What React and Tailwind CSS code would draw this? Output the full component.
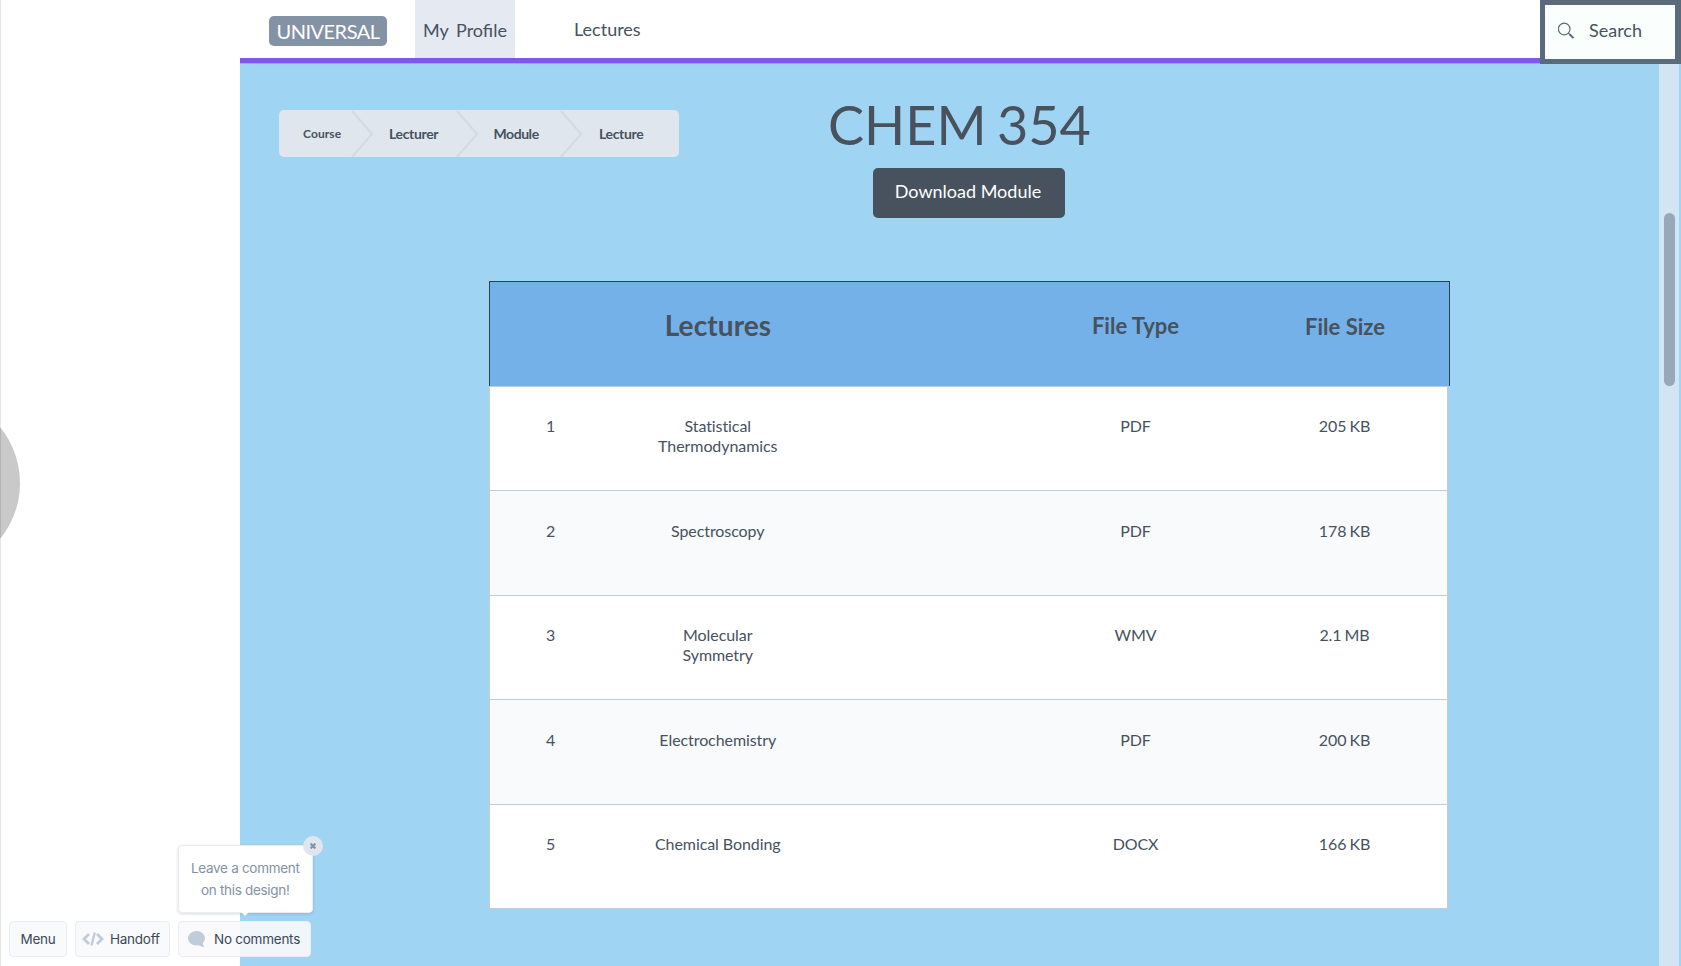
const crumbs = [
  { label: "Course", cell: "w-[82px] pl-6 pt-px text-[12px] tracking-[0.1px]" },
  { label: "Lecturer", cell: "w-[105px] pl-[28px] pt-px text-sm tracking-[-0.35px]" },
  { label: "Module", cell: "w-[105px] pl-[27.5px] pt-px text-sm tracking-[-0.45px]" },
  { label: "Lecture", cell: "w-[106px] pl-[28px] pt-px text-sm tracking-[-0.35px]" },
];

const rows = [
  { id: 1, name: ["Statistical", "Thermodynamics"], type: "PDF", size: "205 KB", box: "h-[104px] bg-white" },
  { id: 2, name: ["Spectroscopy"], type: "PDF", size: "178 KB", box: "h-[105px] bg-[#f8fafc] pt-px" },
  { id: 3, name: ["Molecular", "Symmetry"], type: "WMV", size: "2.1 MB", box: "h-[104px] bg-white" },
  { id: 4, name: ["Electrochemistry"], type: "PDF", size: "200 KB", box: "h-[105px] bg-[#f8fafc] pt-px" },
  { id: 5, name: ["Chemical Bonding"], type: "DOCX", size: "166 KB", box: "h-[105px] bg-white border-b" },
];

function Header() {
  return (
    <header className="flex h-16 shrink-0">
      <div className="flex h-[63px] flex-1 border-b-[5px] border-[#8056f0] bg-white shadow-[0_1px_0_#94b0f2]">
        <div className="ml-[29px] mt-4 flex h-[30px] w-[118px] items-center justify-center rounded-[5px] bg-[#8492a6] pb-px text-[20px] leading-none tracking-[-0.5px] text-white">
          UNIVERSAL
        </div>
        <div className="ml-7 flex h-[58px] w-[100px] items-center justify-center bg-[#e5e9f2] pt-px text-[18px] leading-none [word-spacing:3px] whitespace-nowrap">
          My Profile
        </div>
        <div className="ml-[59px] mt-[19px] text-[18px] leading-5">Lectures</div>
      </div>
      <div className="flex h-16 w-[141px] border-[5px] border-r-[6px] border-[#5a6b7b] bg-[#fafffd] pl-[13px]">
        <svg className="mt-[17px] h-[18px] w-[18px]" viewBox="0 0 18 18" fill="none" stroke="#5a6978">
          <circle cx="6.2" cy="7" r="5.8" strokeWidth="1.2" />
          <path d="M10.5 11.3l1.6 1.4" strokeWidth="1.2" />
          <path d="M11.5 12.2l4 3.9" strokeWidth="2" />
        </svg>
        <span className="ml-[13px] mt-[15px] text-[18px] leading-5">Search</span>
      </div>
    </header>
  );
}

function Breadcrumb() {
  return (
    <nav className="relative mt-[46px] ml-[39px] flex h-[47px] w-[400px] items-center overflow-hidden rounded-[5px] bg-[#e0e6ed] font-bold leading-none">
      {crumbs.map((c) => (
        <div key={c.label} className={c.cell}>
          {c.label}
        </div>
      ))}
      <svg className="absolute inset-0 h-full w-full" viewBox="0 0 400 47" fill="none" stroke="#d3dae1" strokeWidth="2">
        <path d="M73 1L93 24L73 47" />
        <path d="M178 1L198 24L178 47" />
        <path d="M282 1L302 24L282 47" />
      </svg>
    </nav>
  );
}

function LectureTable() {
  return (
    <section className="ml-[249px] w-[961px] text-center">
      <div className="flex h-[105px] border border-b-0 border-[#2f3f4f] bg-[#73b1e8] font-bold">
        <div className="w-[122px]" />
        <div className="w-[212px] pt-[26px] text-[28px] leading-[34px] tracking-[0.1px]">Lectures</div>
        <div className="w-[207px]" />
        <div className="w-[209px] pt-[30px] text-[22px] leading-[28px]">File Type</div>
        <div className="w-[209px] pl-px pt-[31px] text-[22px] leading-[28px]">File Size</div>
      </div>
      <div className="w-[959px] text-[16px] leading-5 tracking-[-0.08px]">
        {rows.map((r) => (
          <div key={r.id} className={`flex border-t border-x border-[#c0ccda] ${r.box}`}>
            <div className="w-[121px] pt-[29px]">{r.id}</div>
            <div className="w-[213px] pl-[0.5px] pt-[29px]">
              {r.name.map((line) => (
                <div key={line}>{line}</div>
              ))}
            </div>
            <div className="w-[207px]" />
            <div className="w-[209px] pt-[29px]">{r.type}</div>
            <div className="w-[207px] pl-[2px] pt-[29px] [word-spacing:-1px]">{r.size}</div>
          </div>
        ))}
      </div>
    </section>
  );
}

function Toolbar() {
  return (
    <div className="absolute bottom-[9px] left-[9px] flex h-9 gap-2 font-['Inter',sans-serif] text-[13.5px] leading-none tracking-[-0.25px] text-[#3c4858]">
      <button className="flex w-[58px] items-center justify-center rounded border border-[#e9edf2] bg-[#f9fafc] pt-0.5">Menu</button>
      <button className="flex w-[95px] items-center rounded border border-[#e9edf2] bg-[#f9fafc] pl-1.5">
        <svg className="h-[14px] w-[22px]" viewBox="0 0 22 14" fill="none" stroke="#c0ccda" strokeWidth="2.8">
          <path d="M7 2L2 7l5 5M15 2l5 5-5 5" />
          <path d="M12.8 0.5L9.4 13.5" strokeWidth="2.4" />
        </svg>
        <span className="ml-[6px] pt-0.5">Handoff</span>
      </button>
      <div className="relative">
        <button className="flex h-9 w-[133px] items-center rounded border border-[#e9edf2] bg-[#f9fafc]/90 pl-[9px] whitespace-nowrap">
          <svg className="h-4 w-[17px]" viewBox="0 0 17 16" fill="#c0ccda">
            <ellipse cx="8.5" cy="7.3" rx="8.5" ry="7.3" />
            <path d="M9.5 13.5c2 1.6 4.2 2.3 7 2.4-1-1-1.6-2.2-1.7-4.3z" />
          </svg>
          <span className="ml-[9px] pt-0.5">No comments</span>
        </button>
        <div className="absolute bottom-[44px] left-0 h-[68px] w-[134.5px] rounded border border-[#e9edf2] bg-white pt-[11px] text-center leading-[22px] tracking-[-0.3px] text-[#8492a6] shadow-[0_1px_3px_rgba(60,72,88,0.2)] whitespace-nowrap">
          Leave a comment
          <br />
          on this design!
          <svg className="absolute -bottom-[4px] left-[62px] h-1 w-2" viewBox="0 0 8 4" fill="white">
            <path d="M0 0h8L4 4z" />
          </svg>
          <div className="absolute -top-[10px] -right-[11px] flex h-5 w-5 items-center justify-center rounded-full bg-[#e0e6ed]">
            <svg className="h-[6px] w-[6px]" viewBox="0 0 6 6" stroke="#8492a6" strokeWidth="2.2">
              <path d="M0.6 0.6l4.8 4.8M5.4 0.6l-4.8 4.8" />
            </svg>
          </div>
        </div>
      </div>
    </div>
  );
}

export default function App() {
  return (
    <div className="relative flex h-[966px] w-[1681px] overflow-hidden bg-white font-['Lato',sans-serif] text-[#47525e]">
      <aside className="relative flex w-60 items-center overflow-hidden">
        <div className="-ml-[156px] size-[176px] shrink-0 rounded-full bg-[#c9c9c9]" />
        <div className="absolute inset-y-0 left-0 w-px bg-black/10" />
      </aside>
      <div className="flex flex-1 flex-col bg-[#a0d4f3]">
        <Header />
        <div className="flex flex-1">
          <main className="w-[1419.4px]">
            <div className="flex h-[217px]">
              <div className="w-[439px]">
                <Breadcrumb />
              </div>
              <div className="ml-[146px] flex flex-col items-start">
                <h1 className="ml-[3px] mt-[29px] text-[54px] leading-[64px] [word-spacing:-3.5px] whitespace-nowrap">CHEM 354</h1>
                <button className="mt-[11px] ml-12 h-[50px] w-48 rounded-[5px] bg-[#47525e] pr-0.5 pb-[3px] text-[18px] text-white">
                  Download Module
                </button>
              </div>
            </div>
            <LectureTable />
          </main>
          <div className="mr-px flex flex-1 border-r border-[#a0d4f3] bg-[#d3e5f3]">
            <div className="ml-[4.6px] mt-[149px] h-[173px] w-[11.5px] rounded-full bg-[#99a7ba]" />
          </div>
        </div>
      </div>
      <Toolbar />
    </div>
  );
}
